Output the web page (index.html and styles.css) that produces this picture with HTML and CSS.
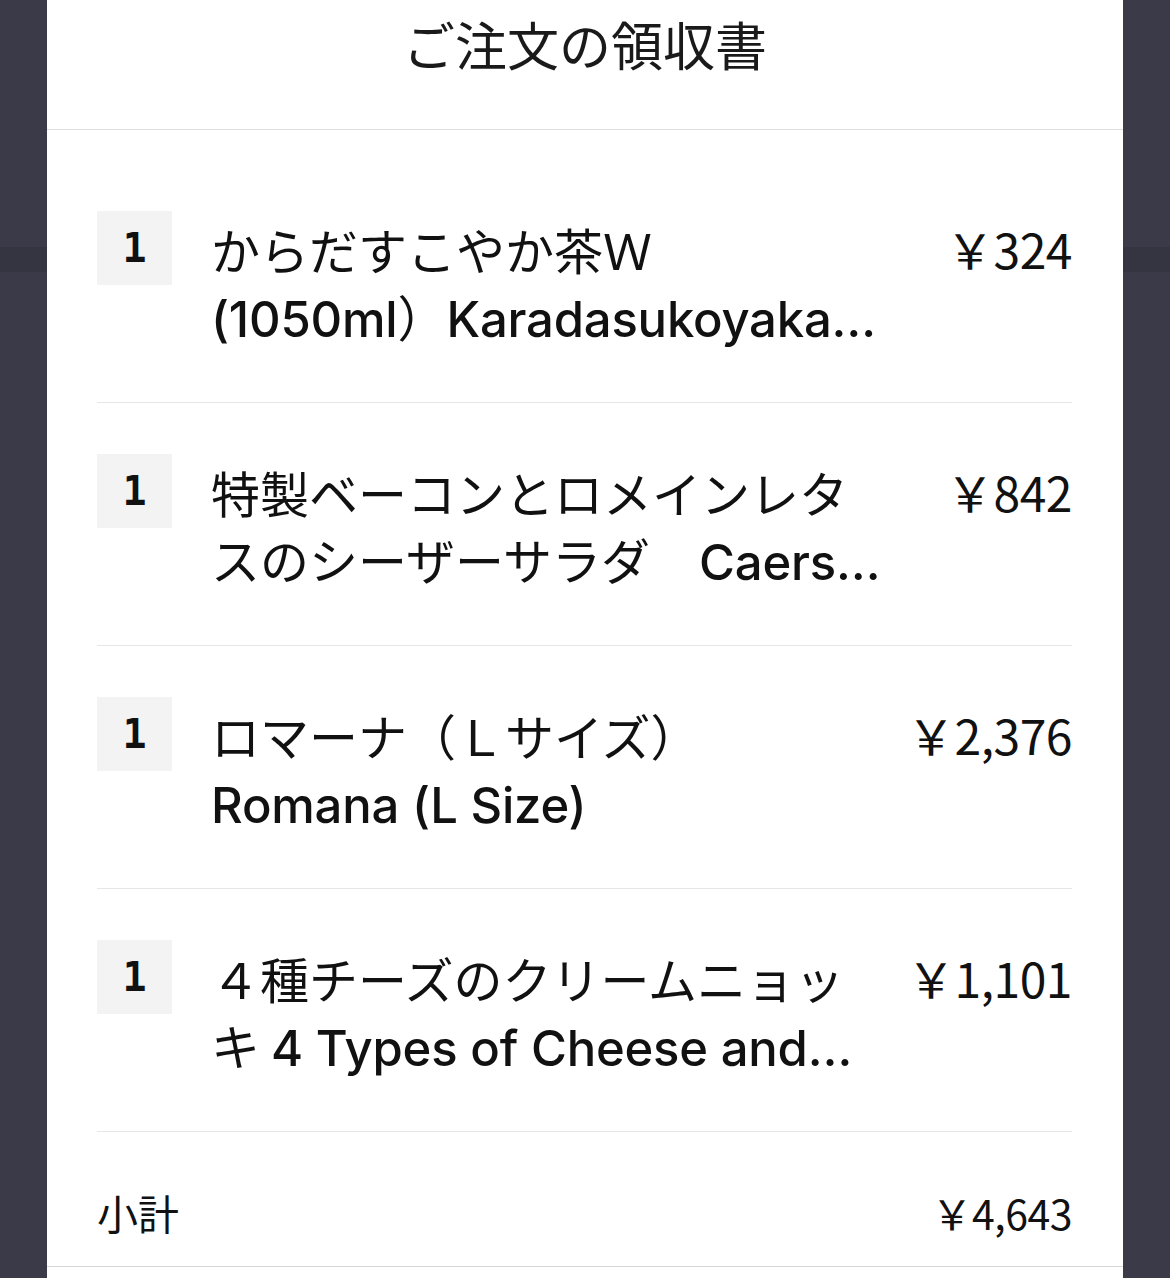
FILE: index.html
```html
<!DOCTYPE html>
<html lang="ja">
<head>
<meta charset="utf-8">
<title>ご注文の領収書</title>
<link rel="stylesheet" href="styles.css">
</head>
<body>
<div class="modal">
  <header class="modal-header">
    <h1 class="title">ご注文の領収書</h1>
  </header>
  <ul class="items">
    <li class="item">
      <div class="qty">1</div>
      <div class="name">
        <span class="line">からだすこやか茶Ｗ</span>
        <span class="line"><span class="en">(1050ml</span>）<span class="en">Karadasukoyaka…</span></span>
      </div>
      <div class="price">￥324</div>
    </li>
    <li class="item">
      <div class="qty">1</div>
      <div class="name">
        <span class="line">特製ベーコンとロメインレタ</span>
        <span class="line">スのシーザーサラダ　<span class="en">Caers…</span></span>
      </div>
      <div class="price">￥842</div>
    </li>
    <li class="item">
      <div class="qty">1</div>
      <div class="name">
        <span class="line">ロマーナ（Ｌサイズ）</span>
        <span class="line"><span class="en">Romana (L Size)</span></span>
      </div>
      <div class="price">￥2,376</div>
    </li>
    <li class="item">
      <div class="qty">1</div>
      <div class="name">
        <span class="line">４種チーズのクリームニョッ</span>
        <span class="line">キ <span class="en">4 Types of Cheese and…</span></span>
      </div>
      <div class="price">￥1,101</div>
    </li>
  </ul>
  <div class="summary">
    <div class="summary-row">
      <span class="label">小計</span>
      <span class="amount">￥4,643</span>
    </div>
  </div>
</div>
</body>
</html>
```
FILE: styles.css
```css
* { box-sizing: border-box; }

html, body {
  margin: 0;
  padding: 0;
  height: 100%;
}

body {
  background: linear-gradient(to bottom, #3b3a48 0, #3b3a48 247px, #353441 247px, #353441 272px, #3b3a48 272px);
  font-family: "Noto Sans CJK JP", sans-serif;
  color: #111;
  overflow: hidden;
}

.modal {
  margin: 0 47px;
  min-height: 100%;
  background: #fff;
}

.modal-header {
  height: 130px;
  border-bottom: 1px solid #dedede;
}

.title {
  margin: 0;
  text-align: center;
  font-weight: 400;
  font-size: 52px;
  line-height: 88px;
  color: #1a1a1a;
}

.items {
  list-style: none;
  margin: 0 51px 0 50px;
  padding: 31px 0 0;
}

.item {
  display: flex;
  align-items: flex-start;
  padding: 50px 0 53px;
  border-bottom: 1px solid #e6e6e6;
}

.item + .item {
  padding-top: 51px;
}

.qty {
  flex: 0 0 75px;
  height: 74px;
  background: #f3f3f3;
  display: flex;
  align-items: center;
  justify-content: center;
  font-family: "DejaVu Sans Mono", monospace;
  font-size: 40px;
  font-weight: 700;
  color: #111;
  margin-right: 39px;
}

.name {
  flex: 1 1 auto;
  min-width: 0;
  padding-top: 4px;
  font-size: 49px;
  line-height: 67px;
}

.line {
  display: block;
  height: 67px;
  white-space: nowrap;
}

.en {
  font-family: "Inter", "Noto Sans", sans-serif;
  font-weight: 500;
  font-size: 49px;
  line-height: 1;
  letter-spacing: -0.2px;
}

.price {
  flex: 0 0 auto;
  padding-top: 4px;
  font-size: 48px;
  line-height: 67px;
  letter-spacing: -0.5px;
  text-align: right;
}

.summary {
  border-bottom: 1px solid #d6d6d6;
  padding: 55px 51px 29px 50px;
}

.summary-row {
  display: flex;
  justify-content: space-between;
  align-items: center;
  font-size: 41px;
  line-height: 50px;
}

.amount {
  letter-spacing: -0.5px;
}
```
